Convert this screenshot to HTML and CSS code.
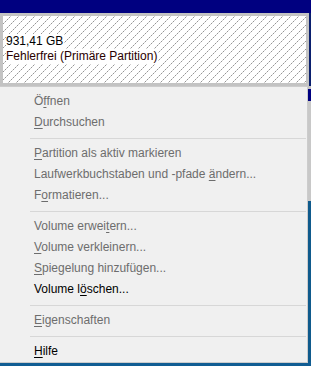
FILE: index.html
```html
<!DOCTYPE html>
<html lang="de">
<head>
<meta charset="utf-8">
<title>Datenträgerverwaltung</title>
<link rel="stylesheet" href="styles.css">
</head>
<body>
<div class="screen">
  <div class="topbar"></div>
  <div class="disk-row">
    <div class="disk">
      <div class="disk-info">
        <div class="line">931,41 GB</div>
        <div class="line status">Fehlerfrei (Primäre Partition)</div>
      </div>
    </div>
  </div>
  <div class="next-row">
    <div class="next-bar"></div>
    <div class="next-body"></div>
  </div>
  <div class="taskbar"></div>

  <div class="menu">
    <div class="item disabled">Ö<u>f</u>fnen</div>
    <div class="item disabled"><u>D</u>urchsuchen</div>
    <div class="sep"></div>
    <div class="item disabled"><u>P</u>artition als aktiv markieren</div>
    <div class="item disabled">Laufwerkbuchstaben und -pfade <u>ä</u>ndern...</div>
    <div class="item disabled">F<u>o</u>rmatieren...</div>
    <div class="sep"></div>
    <div class="item disabled">Volume erwei<u>t</u>ern...</div>
    <div class="item disabled"><u>V</u>olume verkleinern...</div>
    <div class="item disabled"><u>S</u>piegelung hinzufügen...</div>
    <div class="item">Volume l<u>ö</u>schen...</div>
    <div class="sep"></div>
    <div class="item disabled"><u>E</u>igenschaften</div>
    <div class="sep"></div>
    <div class="item"><u>H</u>ilfe</div>
  </div>
</div>
</body>
</html>
```

FILE: styles.css
```css
html, body {
  margin: 0;
  padding: 0;
}
body {
  font-family: "Liberation Sans", Arial, sans-serif;
  font-size: 12px;
  color: #000;
  background: #f0f0f0;
}
.screen {
  position: relative;
  width: 311px;
  height: 366px;
  overflow: hidden;
  display: flex;
  flex-direction: column;
}
.topbar {
  height: 13px;
  background: #000080;
  flex: none;
}
.disk-row {
  flex: none;
  display: flex;
  background: #0a1f6e;
}
.disk {
  box-sizing: border-box;
  width: 309px;
  height: 73px;
  border: 3px solid #c3c3c3;
  background-color: #fff;
  background-image: url("data:image/svg+xml,%3Csvg xmlns='http://www.w3.org/2000/svg' width='8' height='8' shape-rendering='crispEdges'%3E%3Cg fill='%23959595'%3E%3Crect x='0' y='7' width='1' height='1'/%3E%3Crect x='2' y='5' width='1' height='1'/%3E%3Crect x='4' y='3' width='1' height='1'/%3E%3Crect x='6' y='1' width='1' height='1'/%3E%3C/g%3E%3Cg fill='%23cfcfcf'%3E%3Crect x='1' y='6' width='1' height='1'/%3E%3Crect x='3' y='4' width='1' height='1'/%3E%3Crect x='5' y='2' width='1' height='1'/%3E%3Crect x='7' y='0' width='1' height='1'/%3E%3C/g%3E%3C/svg%3E");
  background-repeat: repeat;
}
.disk-info {
  padding: 18px 0 0 3px;
  line-height: 15px;
}
.line {
  width: fit-content;
  background: #fff;
  padding-right: 1px;
}
.status {
  color: #2a0000;
}
.next-row {
  flex: 1;
  display: flex;
  flex-direction: column;
  border-top: 3px solid #c3c3c3;
}
.next-bar {
  height: 12px;
  background: #000080;
}
.next-body {
  flex: 1;
  background: linear-gradient(#c8c8c8 0, #c8c8c8 100px, #0f5a8c 100px);
}
.taskbar {
  flex: none;
  height: 4px;
  background: #115d93;
}
.menu {
  position: absolute;
  top: 86px;
  left: -1px;
  width: 309px;
  box-sizing: border-box;
  border: 1px solid #cccccc;
  background: #f0f0f0;
  padding: 4px 0 0 0;
}
.item {
  height: 21px;
  line-height: 21px;
  padding-left: 34px;
  white-space: nowrap;
  color: #000;
}
.item.disabled {
  color: #6d6d6d;
}
.item u {
  text-decoration-thickness: 1px;
  text-underline-offset: 2px;
}
.sep {
  height: 1px;
  margin: 5px 1px 4px 30px;
  background: #d7d7d7;
}
```
